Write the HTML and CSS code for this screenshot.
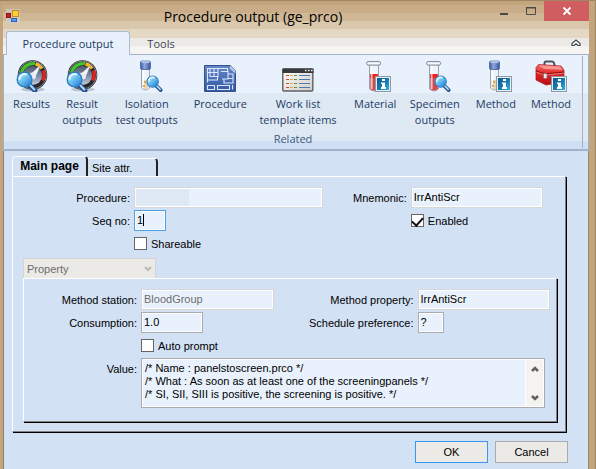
FILE: index.html
```html
<!DOCTYPE html>
<html lang="en">
<head>
<meta charset="utf-8">
<title>Procedure output (ge_prco)</title>
<link rel="stylesheet" href="styles.css">
</head>
<body>
<svg class="sprite" aria-hidden="true">
  <defs>
    <linearGradient id="lens" x1="0" y1="0" x2="1" y2="1"><stop offset="0" stop-color="#e8fbff"/><stop offset=".45" stop-color="#6cc4f2"/><stop offset="1" stop-color="#1a6fd0"/></linearGradient>
    <linearGradient id="dial" x1="0" y1="0" x2="0" y2="1"><stop offset="0" stop-color="#50596b"/><stop offset=".5" stop-color="#7d89a3"/><stop offset="1" stop-color="#c3cbdc"/></linearGradient>
    <linearGradient id="info" x1="0" y1="0" x2="1" y2="1"><stop offset="0" stop-color="#0b5a86"/><stop offset=".5" stop-color="#1878ae"/><stop offset="1" stop-color="#2fb0e4"/></linearGradient>
    <linearGradient id="cap" x1="0" y1="0" x2="1" y2="0"><stop offset="0" stop-color="#3c5a9c"/><stop offset=".4" stop-color="#8ba6dd"/><stop offset="1" stop-color="#3a5596"/></linearGradient>
    <linearGradient id="plan" x1="0" y1="0" x2="0" y2="1"><stop offset="0" stop-color="#6487c6"/><stop offset="1" stop-color="#3358a2"/></linearGradient>
    <linearGradient id="paper" x1="0" y1="0" x2="1" y2="1"><stop offset="0" stop-color="#fffefb"/><stop offset="1" stop-color="#cfcdc8"/></linearGradient>
    <linearGradient id="box" x1="0" y1="0" x2="0" y2="1"><stop offset="0" stop-color="#f46a66"/><stop offset=".5" stop-color="#dc2222"/><stop offset="1" stop-color="#b80e12"/></linearGradient>
  </defs>
  <symbol id="glass" viewBox="0 0 18 18">
    <path d="M10 10.500l5.500 5.500" stroke="#24508f" stroke-width="4" stroke-linecap="round"/>
    <path d="M10.500 10.500l4.500 4.700" stroke="#a9d4f5" stroke-width="1.800" stroke-linecap="round"/>
    <circle cx="7" cy="7" r="6" fill="url(#lens)" stroke="#2f7fc4" stroke-width="1.200"/>
    <path d="M3 7a4 4 0 0 1 6-4" stroke="#fff" stroke-width="1.600" fill="none" opacity=".8"/>
  </symbol>
  <symbol id="badge" viewBox="0 0 16 16">
    <rect x=".5" y=".5" width="15" height="15" fill="#e9eef2" stroke="#8b99a5"/>
    <rect x="2" y="2" width="12" height="12" fill="url(#info)"/>
    <path d="M7 3h3v2H7zM6 6.500h4V11h1v2H6v-2h1V8H6z" fill="#fff"/>
  </symbol>
  <symbol id="gauge" viewBox="0 0 32 32">
    <ellipse cx="17" cy="29.500" rx="12" ry="2" fill="#9aa7b8" opacity=".6"/>
    <circle cx="16.500" cy="15" r="14.800" fill="#26282b"/>
    <circle cx="16.500" cy="15" r="13.900" fill="none" stroke="#85898e" stroke-width="1"/>
    <path d="M5.500 13A11.500 11.500 0 0 1 19 3.800" fill="none" stroke="#43c52b" stroke-width="3.200"/>
    <path d="M19.500 3.900a11.500 11.500 0 0 1 6.500 4.700" fill="none" stroke="#ffb61c" stroke-width="3.200"/>
    <path d="M27.300 10.500a11.500 11.500 0 0 1-.8 10" fill="none" stroke="#e7201b" stroke-width="3.200"/>
    <circle cx="16.500" cy="15.500" r="9.600" fill="url(#dial)"/>
    <path d="M14 14.500L25 4.500 19.500 17.500z" fill="#f3f5f8" stroke="#747d8e" stroke-width=".5"/>
    <circle cx="16.500" cy="16" r="3.500" fill="#e9edf3"/>
    <use href="#glass" x="0" y="11" width="22" height="22"/>
  </symbol>
  <symbol id="vial" viewBox="0 0 32 32">
    <path d="M8.500 9h8v19q-4 4-8 0z" fill="#edf3f9" stroke="#99a9ba"/>
    <path d="M9.500 20h6v8q-3 2-6 0z" fill="#ecd4aa"/>
    <path d="M10.500 10v18" stroke="#fff" stroke-width="1.500"/>
    <path d="M11 21h2v2h-2zM10 25h2v2h-2z" fill="#d0a968"/>
    <rect x="7.500" y="1" width="10" height="8.500" rx="1.500" fill="url(#cap)" stroke="#40598e" stroke-width=".7"/>
    <ellipse cx="12.500" cy="2" rx="4.500" ry="1.300" fill="#a9c0ec"/>
  </symbol>
  <symbol id="tube" viewBox="0 0 32 32">
    <path d="M7.500 4.500h9V29q-4.500 4-9 0z" fill="#f0f4f8" stroke="#96a3b3"/>
    <path d="M8.300 14.500h7.500V29q-3.700 3-7.500 0z" fill="#d9494b"/>
    <path d="M8.300 14h7.500v4H8.300z" fill="#ef2222"/>
    <path d="M9.800 6v23" stroke="#fff" stroke-width="1.500" opacity=".7"/>
    <rect x="4.600" y="1.600" width="14" height="3.500" rx="1.700" fill="#f5f7fa" stroke="#748497"/>
  </symbol>
  <symbol id="blueprint" viewBox="0 0 32 32">
    <path d="M.5 5.500h26l5 5v21H.5z" fill="url(#plan)" stroke="#34518f"/>
    <path d="M26.500 5.500l5 5v3l-6-5z" fill="#b8c9e8"/>
    <path d="M3.500 22.500v-14h20v3M3.500 25.500h7v4h-7zM13.500 25.500h12v4h-12zM6 8.500v8h8v-8M10 8.500v8M3.500 12.500h10M3.500 20h10v-3M17 11.500h7v3M18 19h4M24 14h5v9h-9v-4h4v-5M24 18.500h5M28.500 25v4.500" fill="none" stroke="#dce8fa" stroke-width="1.100"/>
  </symbol>
  <symbol id="list" viewBox="0 0 32 32">
    <rect x=".8" y="9" width="30" height="22" rx="1" fill="url(#paper)" stroke="#5e5f63" stroke-width="1.400"/>
    <path d="M.5 8.500h31v4.500H.5z" fill="#393b3f"/>
    <path d="M23 10.500h1.500M26 10.500h1.500M29 10.500h1.500" stroke="#fff" stroke-width="1.300"/>
    <path d="M4 15.500h3M4 19.500h3M4 23.500h3M4 27.500h3" stroke="#c3514c" stroke-width="1.200"/>
    <path d="M8 15.500h3M8 19.500h3M8 23.500h3M8 27.500h3" stroke="#efa336" stroke-width="1.200"/>
    <path d="M12 15.500h3M12 19.500h3M12 23.500h3M12 27.500h3" stroke="#59944c" stroke-width="1.200"/>
    <path d="M17 15.500h11M17 19.500h11M17 23.500h11M17 27.500h11" stroke="#5278ae" stroke-width="1.200"/>
  </symbol>
  <symbol id="toolbox" viewBox="0 0 32 32">
    <path d="M9.500 6V3q0-1.500 1.500-1.500h6q1.500 0 2 1.500l.8 3.500" fill="none" stroke="#4d5358" stroke-width="2"/>
    <path d="M1 7.500L3.500 4.500 26 6l3 4v12l-18 3L1 20z" fill="url(#box)" stroke="#a91518" stroke-width=".7"/>
    <path d="M3.800 5.200L25 6.500l2.500 3.300L9 9z" fill="#f79490"/>
    <path d="M1 11l9 3 19-2" fill="none" stroke="#8f0c10" stroke-width="1.200"/>
    <path d="M1.500 12.200l8.500 3 18.500-2" fill="none" stroke="#f58d88" stroke-width=".8"/>
    <rect x="8.500" y="13.500" width="3.500" height="5" rx="1" fill="#e6e6e6" stroke="#777" stroke-width=".7"/>
  </symbol>
</svg>

<main class="window">
  <div class="chrome">
    <header class="titlebar">
      <svg class="appicon" viewBox="0 0 14 14" aria-hidden="true">
        <rect width="14" height="14" fill="#cbd0d6" opacity=".65"/>
        <rect x=".5" y="4.500" width="4" height="4" fill="#c5201d" stroke="#8e1414"/>
        <rect x="6.500" y="1.500" width="6" height="6" fill="#ffce38" stroke="#c88d13"/>
        <rect x="5.500" y="9.500" width="5" height="3" fill="#5e9ae8" stroke="#2e61b3"/>
      </svg>
      <h1 class="title">Procedure output (ge_prco)</h1>
      <div class="controls">
        <button class="ctl" aria-label="Minimize"><svg viewBox="0 0 12 12"><path d="M2 8h8v2H2z" fill="#4d4a46"/></svg></button>
        <button class="ctl" aria-label="Maximize"><svg viewBox="0 0 12 12"><path d="M1.500 2v7.500h9V2M1 2.500h10" fill="none" stroke="#4d4a46"/><path d="M1 2h10v1.500H1z" fill="#4d4a46"/></svg></button>
        <button class="ctl close" aria-label="Close"><svg viewBox="0 0 12 12"><path d="M2.500 2.500l7 7M9.500 2.500l-7 7" stroke="#fff" stroke-width="1.800"/></svg></button>
      </div>
    </header>
    <nav class="ribbon-tabs">
      <button class="rtab active">Procedure output</button>
      <button class="rtab">Tools</button>
      <button class="collapse" aria-label="Collapse ribbon"><svg viewBox="0 0 10 8"><path d="M1 6.500V4.500L5 1l4 3.500v2H7L5 4.700 3 6.500z" fill="#fff" stroke="#3d4553" stroke-width="1.200"/></svg></button>
    </nav>
  </div>

  <section class="ribbon" aria-label="Related">
    <div class="group">
      <div class="items">
        <button class="item"><svg viewBox="0 0 32 32"><use href="#gauge"/></svg>Results</button>
        <button class="item"><svg viewBox="0 0 32 32"><use href="#gauge"/></svg>Result<br>outputs</button>
        <button class="item"><svg viewBox="0 0 32 32"><use href="#vial" x="2"/><use href="#glass" x="15" y="15" width="17" height="17"/></svg>Isolation<br>test outputs</button>
        <button class="item"><svg viewBox="0 0 32 32"><use href="#blueprint"/></svg>Procedure</button>
        <button class="item"><svg viewBox="0 0 32 32"><use href="#list"/></svg>Work list<br>template items</button>
        <button class="item"><svg viewBox="0 0 32 32"><use href="#tube" x="3"/><use href="#badge" x="16" y="16" width="16" height="16"/></svg>Material</button>
        <button class="item"><svg viewBox="0 0 32 32"><use href="#tube" x="3"/><use href="#glass" x="15" y="15" width="17" height="17"/></svg>Specimen<br>outputs</button>
        <button class="item"><svg viewBox="0 0 32 32"><use href="#vial" x="2"/><use href="#badge" x="16" y="16" width="16" height="16"/></svg>Method</button>
        <button class="item"><svg viewBox="0 0 32 32"><use href="#toolbox"/><use href="#badge" x="16" y="16" width="16" height="16"/></svg>Method</button>
      </div>
      <div class="group-name">Related</div>
    </div>
  </section>

  <form class="body">
    <div class="tabs">
      <button type="button" class="tab current">Main page</button>
      <button type="button" class="tab">Site attr.</button>
    </div>
    <div class="panel">
      <div class="fields outer">
        <label for="procedure">Procedure:</label>
        <input id="procedure" class="flat masked" type="text">
        <label for="mnemonic">Mnemonic:</label>
        <input id="mnemonic" class="flat" type="text" value="IrrAntiScr">
        <label for="seq">Seq no:</label>
        <span class="seqbox"><input id="seq" type="text" value="1"><i class="caret"></i></span>
        <label class="check enabled"><input type="checkbox" checked>Enabled</label>
        <label class="check second"><input type="checkbox">Shareable</label>
      </div>
      <div class="kind">
        <select aria-label="Section" disabled><option>Property</option></select>
        <svg viewBox="0 0 8 6" aria-hidden="true"><path d="M1 1l3 3 3-3" fill="none" stroke="#b9b9b9" stroke-width="2"/></svg>
      </div>
      <div class="subpanel">
        <div class="fields inner">
          <label for="station">Method station:</label>
          <input id="station" class="flat" type="text" value="BloodGroup" disabled>
          <label for="property">Method property:</label>
          <input id="property" class="flat" type="text" value="IrrAntiScr">
          <label for="consumption">Consumption:</label>
          <input id="consumption" class="medium" type="text" value="1.0">
          <label for="preference">Schedule preference:</label>
          <input id="preference" class="tiny" type="text" value="?">
          <label class="check second"><input type="checkbox">Auto prompt</label>
          <label for="value" class="first">Value:</label>
          <div class="memo">
            <textarea id="value" rows="3">/* Name : panelstoscreen.prco */
/* What : As soon as at least one of the screeningpanels */
/* SI, SII, SIII is positive, the screening is positive. */</textarea>
            <div class="scroll" aria-hidden="true">
              <svg viewBox="0 0 8 6"><path d="M1 5l3-3 3 3" fill="none" stroke="#606060" stroke-width="2.500"/></svg>
              <svg viewBox="0 0 8 6"><path d="M1 1l3 3 3-3" fill="none" stroke="#606060" stroke-width="2.500"/></svg>
            </div>
          </div>
        </div>
      </div>
    </div>
    <footer class="actions">
      <button type="button" class="push default">OK</button>
      <button type="button" class="push">Cancel</button>
    </footer>
  </form>
</main>
</body>
</html>
```
FILE: styles.css
```css
* { box-sizing: border-box; }

body {
  margin: 0;
  background: #c2a57c;
  font: 11px/16px "Liberation Sans", Arial, sans-serif;
  color: #000;
}

button, input, select, textarea {
  font: inherit;
  color: inherit;
  margin: 0;
  padding: 0;
  border: 0;
  border-radius: 0;
  background: none;
}

.sprite { position: absolute; width: 0; height: 0; }

.window {
  display: flex;
  flex-direction: column;
  min-height: 100vh;
  padding: 0 6px 0 3px;
  border-top: 1px solid #9f8560;
  border-right: 1px solid #9f8560;
}

/* Title bar and ribbon tabs share one banded backdrop */
.chrome {
  padding-left: 1px;
  background: linear-gradient(#c2a57c 4px, #c8ad88 4px 12px, #d0b896 12px 20px, #dac8ac 20px 28px, #e4d8c4 28px 37px, #ebeae6 37px 45px, #f5f4f0 45px);
  font-family: "Open Sans", "Noto Sans", sans-serif;
}

.titlebar { display: flex; height: 30px; padding-left: 2px; }
.appicon { width: 14px; height: 14px; margin-top: 8px; }
.title {
  flex: 1;
  margin: 0;
  padding: 6px 4px 0 0;
  font-size: 14px;
  line-height: 20px;
  font-weight: 400;
  text-align: center;
}
.controls { display: flex; align-items: flex-start; }
.ctl { display: flex; justify-content: center; align-items: center; width: 27px; height: 20px; }
.ctl svg { width: 12px; height: 12px; }
.ctl.close { width: 45px; background: #d05e60; }

.ribbon-tabs { display: flex; height: 23px; padding-left: 2px; }
.rtab { width: 62px; padding-top: 2px; font-size: 11px; line-height: 16px; color: #3c4658; }
.rtab.active {
  position: relative;
  z-index: 1;
  width: 124px;
  height: 24px;
  padding-top: 0;
  border: 1px solid #a9bcd4;
  border-bottom: 0;
  border-radius: 3px 3px 0 0;
  background: #e9f2fc;
  color: #1e3a5f;
}
.collapse { margin-left: auto; width: 26px; }
.collapse svg { width: 10px; height: 8px; }

.ribbon {
  padding: 1px 5px 1px 0;
  border: 1px solid #9fb1cb;
  border-bottom-width: 2px;
  background: linear-gradient(#e9f2fc 38px, #dee9f4 38px 86px, #d0dff3 86px);
  font-family: "Open Sans", "Noto Sans", sans-serif;
  color: #1e3a66;
}
.group { border-right: 1px solid #9fb1cb; }
.items {
  display: grid;
  grid-template-columns: 55fr 46fr 83fr 64fr 91fr 63fr 56fr 66fr 44fr 9fr;
  min-height: 74px;
}
.item {
  display: flex;
  flex-direction: column;
  align-items: center;
  min-width: 0;
  padding-top: 4px;
  font-size: 11px;
  line-height: 16px;
  white-space: nowrap;
}
.item svg { flex: none; width: 32px; height: 32px; margin-bottom: 4px; }
.group-name { font-size: 11px; line-height: 18px; text-align: center; color: #3d5a80; }

.body {
  flex: 1;
  padding: 5px 21px 6px 8px;
  border-left: 1px solid #8f7d66;
  border-right: 1px solid #9f8560;
  background: #d3e1f4;
}

.tabs { display: flex; align-items: flex-end; }
.tab {
  width: 70px;
  height: 18px;
  padding: 2px 4px 0;
  border-top: 1px solid #fff;
  border-right: 2px solid #222;
  border-radius: 0 4px 0 0;
  line-height: 15px;
  text-align: left;
}
.tab.current {
  width: 76px;
  height: 20px;
  padding: 0;
  border-left: 1px solid #fff;
  border-radius: 4px 4px 0 0;
  font-size: 12px;
  font-weight: 700;
  text-align: center;
}

/* Raised bevel: white top-left, grey then black bottom-right */
.panel, .subpanel {
  border: 1px solid;
  border-color: #fff #808080 #808080 #fff;
  box-shadow: 1px 1px 0 #000;
}
.panel { margin-right: 1px; padding: 10px 8px 9px 10px; }

.fields {
  display: grid;
  grid-auto-rows: minmax(21px, auto);
  gap: 2px 4px;
  align-items: center;
}
.fields label { text-align: right; white-space: nowrap; }
.outer { grid-template-columns: 107px 190fr 80px 133fr; padding-right: 14px; }
.inner { grid-template-columns: 113px 133fr 136px 133fr; padding: 10px 6px 13px 0; }

.fields input[type="text"] {
  width: 100%;
  height: 21px;
  padding: 0 2px 2px;
  border: 1px solid #a8abb0;
  outline: 1px solid #fff;
  outline-offset: -2px;
  background: #e9f2fc;
}
.fields input.flat { border-color: #d5d7d9; }
.fields input:disabled { color: #6d6d6d; }
.fields input.masked {
  background: linear-gradient(90deg, #dfe9f3 54px, #e9f2fc 54px);
}
.fields input.medium { width: 62px; }
.fields input.tiny { width: 26px; }
.seqbox { display: flex; align-items: center; position: relative; width: 32px; }
.fields #seq { border-color: #4f9fe6; }
.caret { position: absolute; left: 9px; top: 4px; width: 1px; height: 12px; background: #000; }

.fields .check {
  display: flex;
  align-items: center;
  gap: 4px;
  text-align: left;
}
.check.second { grid-column: 2 / -1; }
.check.enabled { grid-column: 4; }
.check input {
  appearance: none;
  width: 13px;
  height: 13px;
  border: 1px solid #666;
  background: #fff;
}
.check input:checked { display: grid; place-items: center; }
.check input:checked::after {
  content: "";
  width: 5px;
  height: 9px;
  margin-bottom: 3px;
  border: solid #111;
  border-width: 0 2px 2px 0;
  transform: rotate(42deg);
}

.kind {
  display: flex;
  align-items: center;
  width: 133px;
  height: 20px;
  margin-top: 4px;
  padding-right: 3px;
  border: 1px solid #d5d4d0;
  border-bottom: 0;
  background: #ebeae6;
}
.kind select {
  flex: 1;
  padding: 0 3px;
  appearance: none;
  color: #6d6d6d;
  opacity: 1;
}
.kind svg { width: 8px; height: 6px; }

.first { align-self: start; padding-top: 3px; }
.memo {
  display: flex;
  grid-column: 2 / -1;
  height: 50px;
  margin-right: 5px;
  border: 1px solid #a8abb0;
  padding: 1px;
  background: #fff;
}
.memo textarea {
  flex: 1;
  min-width: 0;
  padding: 2px 2px 0;
  background: #e9f2fc;
  line-height: 13px;
  resize: none;
  overflow: hidden;
}
.scroll {
  display: flex;
  flex-direction: column;
  justify-content: space-between;
  align-items: center;
  width: 17px;
  padding: 6px 0 5px;
  margin-left: 1px;
  background: #f4f3f0;
}
.scroll svg { width: 8px; height: 6px; }

.actions { display: flex; justify-content: flex-end; gap: 7px; margin: 9px -1px 0 0; }
.push {
  width: 73px;
  height: 22px;
  border: 1px solid #a9adb3;
  background: #ebeae6;
  line-height: 16px;
}
.push.default { border-color: #3a98f5; }
```
